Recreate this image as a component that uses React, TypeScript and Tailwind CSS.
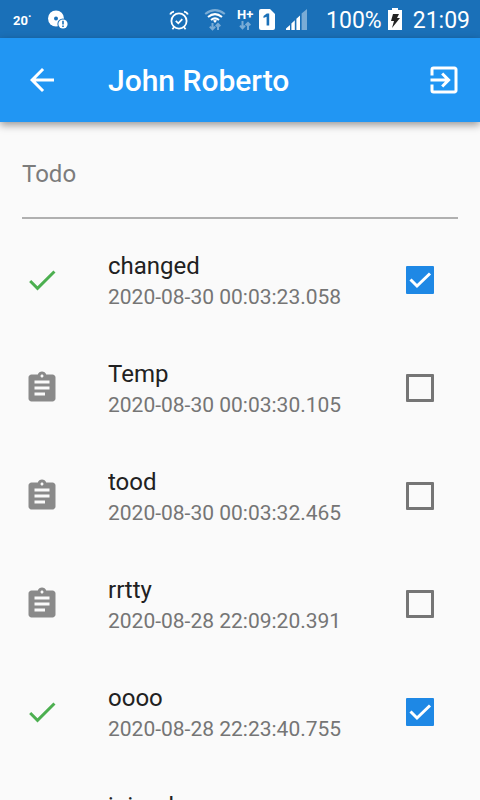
import { useState } from "react";
import { MdArrowBack, MdAssignment, MdCheck, MdExitToApp } from "react-icons/md";

type Todo = { id: number; title: string; date: string; done: boolean };

const initialTodos: Todo[] = [
  { id: 1, title: "changed", date: "2020-08-30 00:03:23.058", done: true },
  { id: 2, title: "Temp", date: "2020-08-30 00:03:30.105", done: false },
  { id: 3, title: "tood", date: "2020-08-30 00:03:32.465", done: false },
  { id: 4, title: "rrtty", date: "2020-08-28 22:09:20.391", done: false },
  { id: 5, title: "oooo", date: "2020-08-28 22:23:40.755", done: true },
  { id: 6, title: "jojood", date: "2020-08-28 22:25:12.640", done: false },
];

function StatusBar() {
  return (
    <div className="flex h-[38px] shrink-0 items-center bg-[#1a70b8] pr-[10px] pl-[13px] pt-[2px] text-white">
      <span className="pt-[2px] text-[13px] leading-5 font-bold">20˙</span>
      <svg className="ml-[17px] h-5 w-5" viewBox="0 0 20 20" aria-hidden="true">
        <circle cx="8" cy="8.5" r="8" fill="#fff" />
        <circle cx="8" cy="8.5" r="2" fill="#1a70b8" />
        <circle cx="15" cy="14" r="5.6" fill="#1a70b8" />
        <circle cx="15" cy="14" r="4.6" fill="#fff" />
        <path d="M14.2 10.8h1.6v3.8h-1.6zM14.2 15.6h1.6v1.5h-1.6z" fill="#1a70b8" />
      </svg>
      <div className="ml-auto flex items-center">
        <svg className="h-[22px] w-[20px]" viewBox="0 0 20 22" fill="none" stroke="#fff" strokeWidth="1.8" aria-hidden="true">
          <circle cx="10" cy="12" r="7.6" />
          <path d="M6.8 11.8l2.5 2.5 4-4.2M1.2 5.6Q2 3 5 2.6M18.8 5.6Q18 3 15 2.6M5 18.2l-1.6 2M15 18.2l1.6 2" />
        </svg>
        <svg className="ml-[15px] h-[24px] w-[22px]" viewBox="0 0 22 24" fill="none" strokeWidth="2" aria-hidden="true">
          <path d="M1.2 6Q11-1.8 20.8 6" stroke="#7aacd6" />
          <path d="M4 9Q11 3.2 18 9M7 12Q11 8.8 15 12" stroke="#fff" />
          <path d="M9 12.6Q11 11.4 13 12.6L11 15z" fill="#fff" />
          <path d="M8.5 15v6M5.8 18.6l2.7 2.7 2.7-2.7M14 22v-6M11.8 18.2L14 16l2.3 2.2" stroke="#7aacd6" />
        </svg>
        <div className="ml-[10px] flex w-[18px] flex-col items-center pb-[2px]">
          <span className="text-[13px] leading-[13px] font-bold">H+</span>
          <svg className="h-[9px] w-[12px]" viewBox="0 0 12 9" fill="none" stroke="#7aacd6" strokeWidth="2" aria-hidden="true">
            <path d="M3.5 0v7M1 4.6l2.5 2.6L6 4.6M9 9V2M6.6 4.2L9 1.8l2.4 2.4" />
          </svg>
        </div>
        <svg className="mb-[2px] ml-[5px] h-[22px] w-[16px]" viewBox="0 0 16 22" aria-hidden="true">
          <path d="M2 1h9l5 5v14q0 2-2 2H2q-2 0-2-2V3q0-2 2-2z" fill="#fff" />
          <path d="M4.5 8l3.3-2.4h2.4v12H7.6V8.8L4.5 10z" fill="#1a70b8" />
        </svg>
        <svg className="mb-[2px] ml-[11px] h-[22px] w-[21px]" viewBox="0 0 21 22" aria-hidden="true">
          <path d="M0 22v-1.5l4-3.5v5zM5.4 22v-6.4l3.4-3.4V22zM10.4 22V10.8L14 7.4V22z" fill="#fff" />
          <path d="M15.6 22V5.6L21 1v21z" fill="#7aacd6" />
        </svg>
        <span className="ml-[19px] pt-[2px] text-[23px] leading-8">100%</span>
        <svg className="mb-[2px] ml-[6px] h-[22px] w-[14px]" viewBox="0 0 14 22" aria-hidden="true">
          <path d="M4 0h6v2h4v20H0V2h4z" fill="#fff" />
          <path d="M5 6h6l-2 4h3l-8 10 2-7H3z" fill="#222" />
        </svg>
        <time className="ml-[11px] pt-[2px] text-[23px] leading-8">21:09</time>
      </div>
    </div>
  );
}

function TodoRow({ todo, onToggle }: { todo: Todo; onToggle: () => void }) {
  const inputId = `todo-${todo.id}`;
  return (
    <li className="flex h-[108px] shrink-0 items-center px-6">
      {todo.done ? (
        <MdCheck className="size-9 shrink-0 text-[#4caf50]" />
      ) : (
        <MdAssignment className="size-9 shrink-0 text-[#8a8a8a]" />
      )}
      <label htmlFor={inputId} className="ml-12 flex min-w-0 flex-1 flex-col pt-[2px]">
        <span className="truncate text-2xl leading-8 text-[#212121]">{todo.title}</span>
        <span className="truncate text-[21px] leading-[30px] text-[#757575]">{todo.date}</span>
      </label>
      <span className="grid w-[72px] shrink-0 place-items-center">
        <input
          id={inputId}
          type="checkbox"
          checked={todo.done}
          onChange={onToggle}
          className="peer col-start-1 row-start-1 size-7 appearance-none rounded-[1px] border-3 border-[#757575] checked:border-[#1e88e5] checked:bg-[#1e88e5]"
        />
        <svg
          className="pointer-events-none col-start-1 row-start-1 hidden size-7 peer-checked:block"
          viewBox="0 0 28 28"
          fill="none"
          stroke="#fff"
          strokeWidth="3"
          aria-hidden="true"
        >
          <path d="M4.5 13.5l6.5 6.5L24 7.5" />
        </svg>
      </span>
    </li>
  );
}

export default function App() {
  const [todos, setTodos] = useState(initialTodos);
  const toggle = (id: number) =>
    setTodos((list) => list.map((t) => (t.id === id ? { ...t, done: !t.done } : t)));

  return (
    <div className="flex h-screen flex-col overflow-hidden bg-[#fafafa] font-[Roboto,sans-serif]">
      <StatusBar />
      <header className="z-10 flex h-[84px] shrink-0 items-center bg-[#2196f3] text-white shadow-[0_3px_8px_rgba(0,0,0,0.4)]">
        <button type="button" aria-label="Back" className="grid h-full w-[84px] place-items-center">
          <MdArrowBack className="size-9" />
        </button>
        <h1 className="ml-6 flex-1 truncate pt-[2px] text-[30px] leading-9 font-medium">John Roberto</h1>
        <button type="button" aria-label="Log out" className="grid h-full w-[72px] place-items-center">
          <MdExitToApp className="size-9" />
        </button>
      </header>
      <main className="flex min-h-0 flex-1 flex-col">
        <div className="shrink-0 px-[22px] pt-2 pb-[7px]">
          <input
            type="text"
            aria-label="Todo"
            placeholder="Todo"
            className="block h-[89px] w-full border-b-2 border-[#b0b0b0] bg-transparent text-2xl text-[#212121] outline-none placeholder:text-[#7c7c7c]"
          />
        </div>
        <ul className="flex min-h-0 flex-1 flex-col overflow-y-auto [scrollbar-width:none]">
          {todos.map((todo) => (
            <TodoRow key={todo.id} todo={todo} onToggle={() => toggle(todo.id)} />
          ))}
        </ul>
      </main>
    </div>
  );
}
